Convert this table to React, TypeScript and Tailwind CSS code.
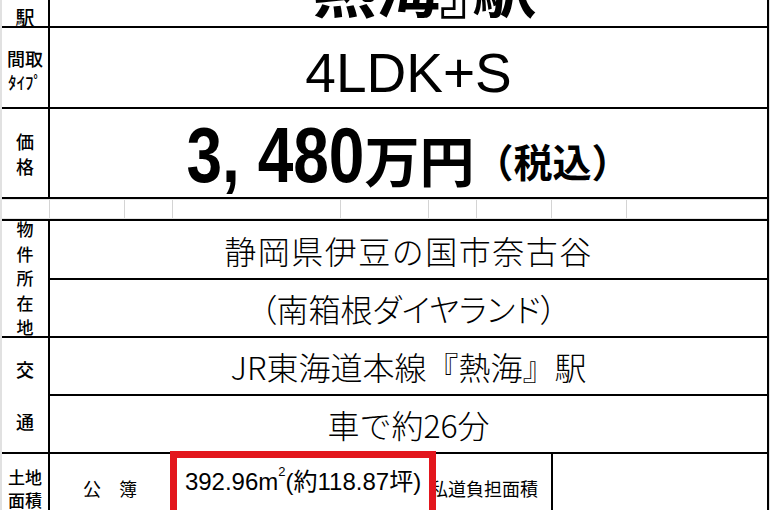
import React from "react"

const latin = "font-['Liberation_Sans','Noto_Sans_CJK_JP',sans-serif]"

const App: React.FC = () => {
  return (
    <div className="w-[770px] h-[510px] overflow-hidden bg-white flex text-black font-['Noto_Sans_CJK_JP',sans-serif]">
      <div className="w-[2px] shrink-0 bg-[#e1e1e1]" />
      <div className="w-[767px] shrink-0 border-r-2 border-black flex flex-col">

        {/* 最寄駅 */}
        <div className="h-[28px] shrink-0 flex border-b-2 border-black">
          <div className="w-[48px] shrink-0 border-r-2 border-black flex items-end justify-center text-[19px] leading-none font-medium">
            駅
          </div>
          <div className="flex-1 flex justify-center overflow-hidden">
            <div className="-mt-[48px] text-[64px] leading-none font-bold whitespace-nowrap [font-feature-settings:'palt']">
              『熱海』駅
            </div>
          </div>
        </div>

        {/* 間取タイプ */}
        <div className="h-[81px] shrink-0 flex border-b-2 border-black">
          <div className="w-[48px] shrink-0 border-r-2 border-black flex flex-col items-center justify-center gap-[6px] pt-[4px] leading-none font-medium">
            <div className="text-[18px]">間取</div>
            <div className="text-[17px]">ﾀｲﾌﾟ</div>
          </div>
          <div className="flex-1 flex items-center justify-center pt-[12px]">
            <span className={`${latin} text-[55px] leading-none`}>4LDK+S</span>
          </div>
        </div>

        {/* 価格 */}
        <div className="h-[90px] shrink-0 flex border-b-2 border-black">
          <div className="w-[48px] shrink-0 border-r-2 border-black flex flex-col items-center justify-center gap-[7px] text-[18px] leading-none font-medium">
            <div>価</div>
            <div>格</div>
          </div>
          <div className="flex-1 flex items-center justify-center pt-[14px]">
            <div className="leading-none font-bold whitespace-nowrap">
              <span className={`${latin} inline-block text-[64px] scale-y-[1.22] origin-[50%_85%]`}>3, 480</span>
              <span className="text-[55px]">万円</span>
              <span className="text-[39px] align-[5px]">（税込）</span>
            </div>
          </div>
        </div>

        {/* spacer row */}
        <div className="h-[22px] shrink-0 border-b-2 border-black">
          <div className="h-full flex border-y border-[#e4e4e4]">
            <div className="w-[48px] shrink-0 border-r border-[#d4d4d4]" />
            <div className="w-[75px] shrink-0 border-r border-[#d4d4d4]" />
            <div className="w-[48px] shrink-0 border-r border-[#d4d4d4]" />
            <div className="w-[168px] shrink-0 border-r border-[#d4d4d4]" />
            <div className="w-[88px] shrink-0 border-r border-[#d4d4d4]" />
            <div className="w-[48px] shrink-0 border-r border-[#d4d4d4]" />
            <div className="w-[75px] shrink-0 border-r border-[#d4d4d4]" />
            <div className="w-[75px] shrink-0 border-r border-[#d4d4d4]" />
            <div className="flex-1" />
          </div>
        </div>

        {/* 物件所在地 */}
        <div className="h-[117px] shrink-0 flex border-b-2 border-black">
          <div className="w-[48px] shrink-0 border-r-2 border-black flex flex-col items-center justify-center overflow-hidden text-[17px] leading-[24.5px] font-medium">
            {['物', '件', '所', '在', '地'].map((c) => (
              <div key={c}>{c}</div>
            ))}
          </div>
          <div className="flex-1 flex flex-col text-[32px] font-light leading-none whitespace-nowrap">
            <div className="h-[59px] shrink-0 border-b-2 border-black flex items-center justify-center tracking-[1.5px]">
              静岡県伊豆の国市奈古谷
            </div>
            <div className="flex-1 flex items-center justify-center [font-feature-settings:'palt']">
              （南箱根ダイヤランド）
            </div>
          </div>
        </div>

        {/* 交通 */}
        <div className="h-[116px] shrink-0 flex border-b-2 border-black">
          <div className="w-[48px] shrink-0 border-r-2 border-black flex flex-col items-center justify-center gap-[34px] text-[18px] leading-none font-medium">
            <div>交</div>
            <div>通</div>
          </div>
          <div className="flex-1 flex flex-col text-[32px] font-light leading-none whitespace-nowrap">
            <div className="h-[58px] shrink-0 border-b-2 border-black flex items-center justify-center">
              JR東海道本線『熱海』駅
            </div>
            <div className="flex-1 flex items-center justify-center">
              車で約26分
            </div>
          </div>
        </div>

        {/* 土地面積 */}
        <div className="flex-1 flex">
          <div className="w-[48px] shrink-0 border-r-2 border-black flex flex-col items-center justify-center text-[17px] leading-[23px] font-medium">
            <div>土地</div>
            <div>面積</div>
          </div>
          <div className="w-[120px] shrink-0 flex items-center justify-center text-[18px] leading-none">
            公　簿
          </div>
          <div className="w-[266px] h-[70px] shrink-0 self-start -mt-[3px] relative z-10 bg-white border-[7px] border-[#e3161d] flex items-center justify-center pb-[8px]">
            <span className={`${latin} text-[24px] leading-none whitespace-nowrap`}>
              392.96m<sup className="text-[13px] align-[8px]">2</sup>(約118.87坪)
            </span>
          </div>
          <div className="w-[125px] shrink-0 -ml-[8px] border-r-2 border-black flex items-center pl-[2px] text-[18px] leading-none whitespace-nowrap">
            私道負担面積
          </div>
          <div className="flex-1" />
        </div>

      </div>
      <div className="flex-1 bg-[#e1e1e1]" />
    </div>
  )
}

export default App
